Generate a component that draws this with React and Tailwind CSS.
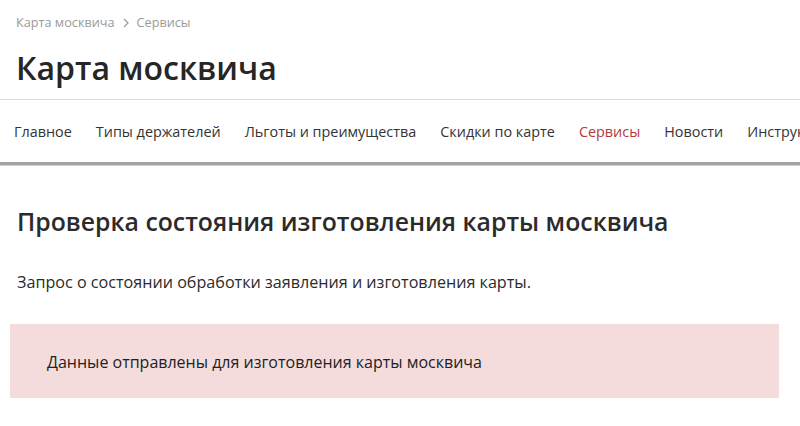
import React from "react";

const navItems = [
  "Главное",
  "Типы держателей",
  "Льготы и преимущества",
  "Скидки по карте",
  "Сервисы",
  "Новости",
  "Инструкции",
];

export default function App() {
  return (
    <div className="w-[800px] h-[426px] overflow-hidden bg-white font-['Open_Sans',sans-serif] text-[#222]">
      {/* breadcrumbs */}
      <div className="flex items-center gap-[7px] pl-4 pt-[13px] text-[12.7px] text-[#9a9a9a] leading-[18px]">
        <span>Карта москвича</span>
        <svg width="8" height="10" viewBox="0 0 8 10" className="mt-[1px]">
          <path d="M2 1l4 4-4 4" fill="none" stroke="#9a9a9a" strokeWidth="1.2" />
        </svg>
        <span>Сервисы</span>
      </div>

      <h1 className="pl-[16px] mt-[17px] text-[32px] leading-[40px] font-semibold text-[#262626]">
        Карта москвича
      </h1>

      {/* nav */}
      <div className="mt-[11px] border-t border-[#dcdcdc] overflow-hidden">
        <nav className="flex gap-[24px] pl-[14px] h-[62px] pt-[1px] items-center text-[14.4px] text-[#333] whitespace-nowrap">
          {navItems.map((item) => (
            <span
              key={item}
              className={item === "Сервисы" ? "text-[#b23a3a]" : ""}
            >
              {item}
            </span>
          ))}
        </nav>
        <div className="h-[4px] bg-[#a3a3a3] border-b border-[#cfcfcf]" />
      </div>

      <h2 className="pl-[17px] mt-[39px] text-[24.8px] leading-[32px] font-semibold text-[#2b2b2b]">
        Проверка состояния изготовления карты москвича
      </h2>

      <p className="pl-[17px] mt-[34px] text-[16.15px] leading-[22px] text-[#2b2b2b]">
        Запрос о состоянии обработки заявления и изготовления карты.
      </p>

      <div className="ml-[10px] mr-[21px] mt-[31px] h-[74px] bg-[#f5dcdc] flex items-center pl-[37px] pt-[2px] text-[16px] text-[#222]">
        Данные отправлены для изготовления карты москвича
      </div>
    </div>
  );
}
